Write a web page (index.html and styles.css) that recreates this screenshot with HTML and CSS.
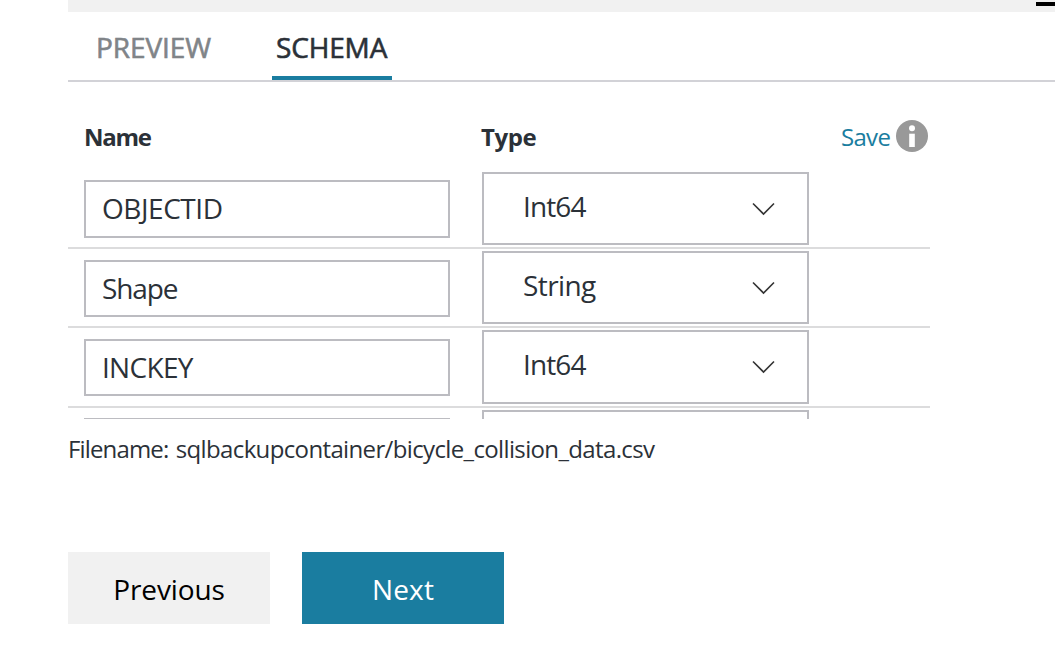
FILE: index.html
```html
<!DOCTYPE html>
<html lang="en">
<head>
<meta charset="utf-8">
<title>Schema</title>
<link rel="stylesheet" href="styles.css">
</head>
<body>
<main class="panel">
  <div class="strip"><span class="strip-mark"></span></div>
  <nav class="tabs">
    <a class="tab preview">PREVIEW</a>
    <a class="tab schema active">SCHEMA</a>
  </nav>
  <section class="table">
    <header class="head">
      <span class="col-name">Name</span>
      <span class="col-type">Type</span>
      <span class="save">Save</span>
      <svg class="info" viewBox="0 0 32 32"><circle cx="16" cy="16" r="16" fill="#999"/><circle cx="16" cy="8.3" r="3" fill="#fff"/><path d="M13.2 13.7h5.6V27h-5.6z" fill="#fff"/></svg>
    </header>
    <div class="rows">
      <div class="row first">
        <div class="field"><span class="objectid">OBJECTID</span></div>
        <div class="select"><span class="int">Int64</span><svg class="chevron" viewBox="0 0 24 14"><path d="M2 1.5 12.5 12 23 1.5"/></svg></div>
      </div>
      <div class="row">
        <div class="field"><span class="shape">Shape</span></div>
        <div class="select"><span class="string">String</span><svg class="chevron" viewBox="0 0 24 14"><path d="M2 1.5 12.5 12 23 1.5"/></svg></div>
      </div>
      <div class="row third">
        <div class="field"><span class="inckey">INCKEY</span></div>
        <div class="select"><span class="int">Int64</span><svg class="chevron" viewBox="0 0 24 14"><path d="M2 1.5 12.5 12 23 1.5"/></svg></div>
      </div>
      <div class="row last">
        <div class="field"></div>
        <div class="select"></div>
      </div>
    </div>
  </section>
  <p class="filename">Filename: <span class="path">sqlbackupcontainer/bicycle_collision_data.csv</span></p>
  <div class="actions">
    <button class="btn previous">Previous</button>
    <button class="btn next">Next</button>
  </div>
</main>
</body>
</html>
```
FILE: styles.css
```css
* { box-sizing: border-box; }
body {
  margin: 0;
  height: 647px;
  overflow: hidden;
  background: #fff;
  color: #2b3138;
  font-family: "Open Sans", "Noto Sans", sans-serif;
  font-size: 28px;
}
.panel { margin-left: 68px; }
.strip {
  display: flex;
  justify-content: flex-end;
  height: 12px;
  padding-top: 2px;
  background: #f1f1f1;
}
.strip-mark { width: 19px; height: 4px; background: #000; }
.tabs {
  display: flex;
  gap: 56px;
  height: 70px;
  padding-left: 24px;
  border-bottom: 2px solid #d2d2d7;
}
.tab {
  height: 68px;
  padding-left: 4px;
  line-height: 70px;
  -webkit-text-stroke: 0.6px currentColor;
  white-space: nowrap;
}
.preview { width: 124px; color: #808488; letter-spacing: -0.1px; }
.schema { width: 120px; letter-spacing: -0.15px; }
.active { border-bottom: 4px solid #1a7da0; }
.table { width: 862px; }
.head {
  display: flex;
  height: 88px;
  padding: 38px 2px 0 16px;
  font-size: 24px;
  line-height: 34px;
}
.col-name { width: 397px; font-weight: 700; letter-spacing: -1.3px; }
.col-type { width: 359px; font-weight: 700; letter-spacing: -0.4px; }
.save { width: 56px; padding-left: 1px; color: #1a7da0; letter-spacing: -0.7px; }
.info { width: 32px; height: 32px; }
.rows { height: 249px; overflow: hidden; }
.row {
  display: flex;
  align-items: flex-start;
  gap: 32px;
  height: 79px;
  padding: 2px 0 0 16px;
  border-bottom: 2px solid #dcdcdd;
}
.third { height: 80px; }
.field {
  width: 366px;
  height: 57px;
  margin-top: 9px;
  padding-left: 16px;
  border: 2px solid #bcbcc1;
  line-height: 52px;
}
.first .field { height: 58px; margin-top: 8px; line-height: 53px; }
.last .field { margin-top: 8px; }
.select {
  display: flex;
  justify-content: space-between;
  width: 327px;
  height: 73px;
  padding: 0 32px 0 39px;
  border: 2px solid #bcbcc1;
  line-height: 65px;
}
.third .select { height: 74px; }
.chevron {
  width: 24px;
  height: 14px;
  margin-top: 28px;
  fill: none;
  stroke: #333;
  stroke-width: 1.6;
}
.objectid { letter-spacing: -0.45px; }
.inckey { letter-spacing: -0.7px; }
.shape { letter-spacing: -1.1px; }
.string { letter-spacing: -0.6px; }
.int { letter-spacing: -0.9px; }
.filename {
  margin: 0;
  height: 133px;
  font-size: 24px;
  line-height: 60px;
  letter-spacing: -0.85px;
  white-space: nowrap;
}
.path { margin-left: 2px; letter-spacing: -0.64px; }
.actions { display: flex; gap: 32px; }
.btn {
  width: 202px;
  height: 72px;
  padding: 2px 0 0;
  border: 0;
  font: inherit;
  letter-spacing: -0.1px;
}
.previous { background: #f1f1f1; color: #000; }
.next { background: #1a7da0; color: #fff; letter-spacing: 0.2px; }
```
